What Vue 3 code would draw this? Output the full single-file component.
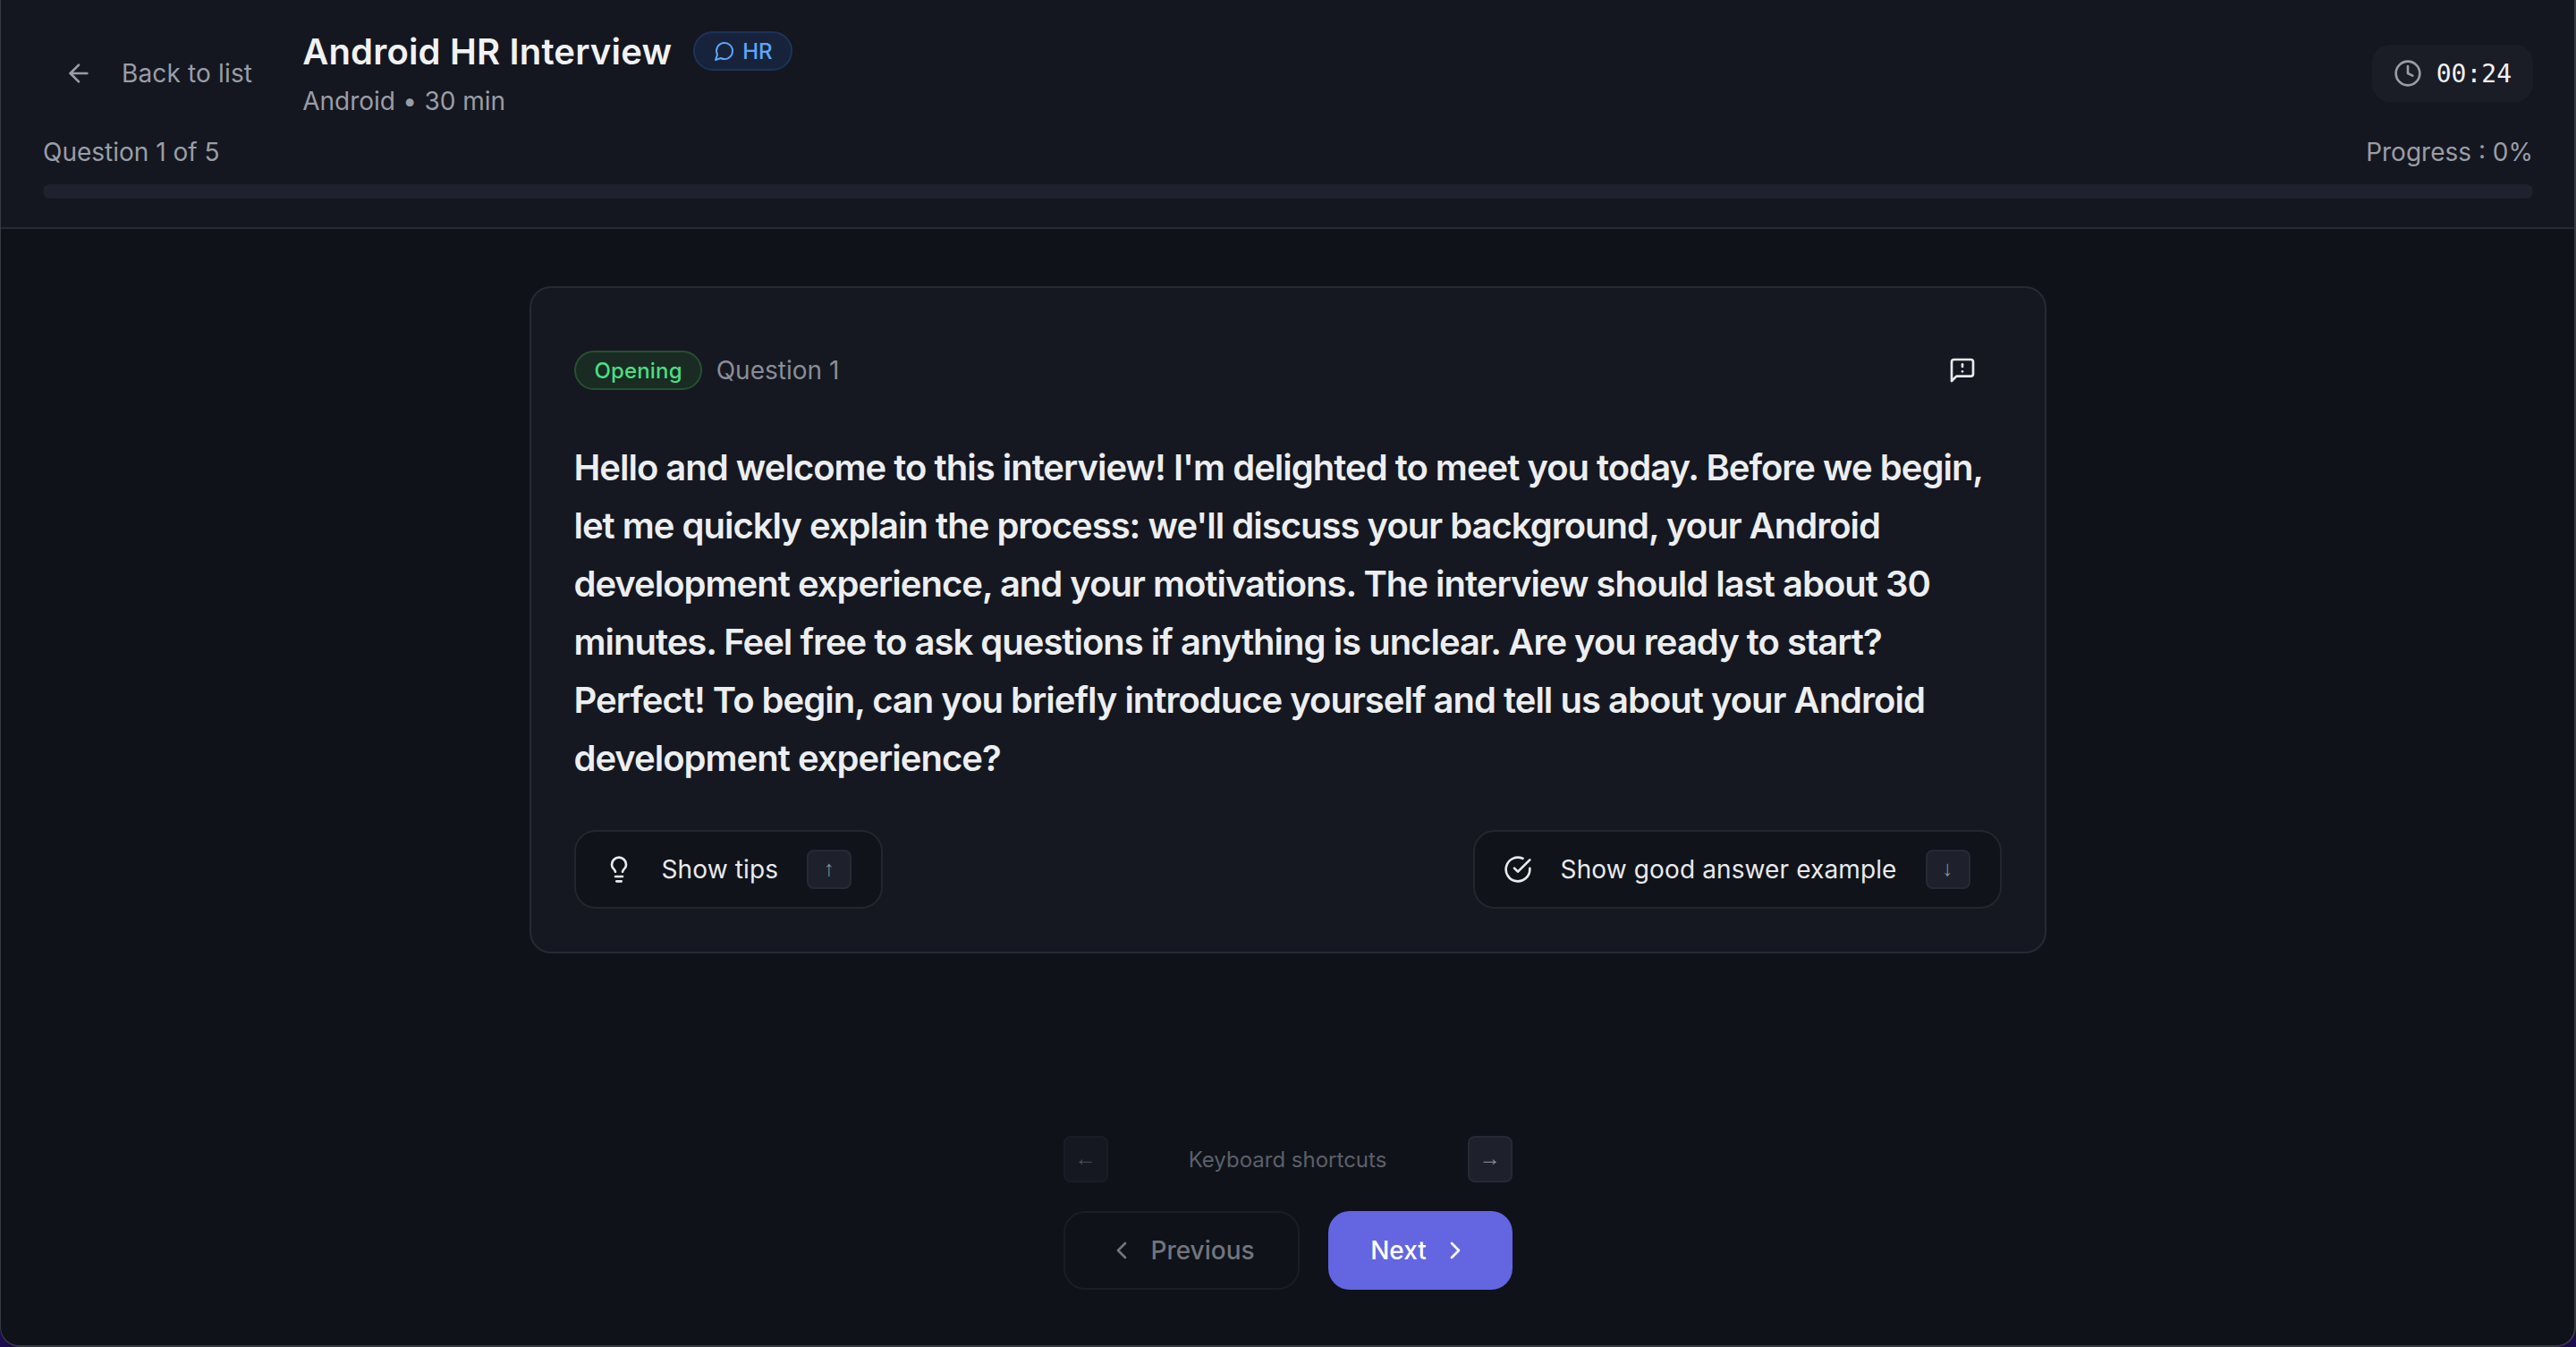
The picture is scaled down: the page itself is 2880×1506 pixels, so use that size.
<template>
  <div class="page">
    <header class="top">
      <div class="top_row">
        <div class="top_left">
          <button class="back">
            <svg class="ic32" viewBox="0 0 24 24"><path d="m12 19-7-7 7-7" /><path d="M19 12H5" /></svg>
            <span>Back to list</span>
          </button>
          <div>
            <div class="title_line">
              <h1>Android HR Interview</h1>
              <span class="type_badge">
                <svg class="ic24" viewBox="0 0 24 24"><path d="M7.9 20A9 9 0 1 0 4 16.1L2 22Z" /></svg>
                HR
              </span>
            </div>
            <p class="sub">Android <span class="dot">•</span> 30 min</p>
          </div>
        </div>
        <div class="timer">
          <svg class="ic32" viewBox="0 0 24 24"><circle cx="12" cy="12" r="10" /><path d="M12 6v6l4 2" /></svg>
          <span>00:24</span>
        </div>
      </div>
      <div class="progress_text">
        <span>Question 1 of 5</span>
        <span>Progress : {{ progress }}%</span>
      </div>
      <div class="bar"><div class="bar_fill" :style="{ width: progress + '%' }"></div></div>
    </header>

    <main class="content">
      <section class="card">
        <div class="card_head">
          <div class="card_tags">
            <span class="tag">Opening</span>
            <span class="qnum">Question 1</span>
          </div>
          <svg class="ic32 report" viewBox="0 0 24 24"><path d="M21 15a2 2 0 0 1-2 2H7l-4 4V5a2 2 0 0 1 2-2h14a2 2 0 0 1 2 2z" /><path d="M12 7v2" /><path d="M12 13h.01" /></svg>
        </div>
        <p class="question">{{ question }}</p>
        <div class="card_actions">
          <button class="action">
            <svg class="ic32" viewBox="0 0 24 24"><path d="M15 14c.2-1 .7-1.7 1.5-2.5 1-.9 1.5-2.2 1.5-3.5A6 6 0 0 0 6 8c0 1 .2 2.2 1.5 3.5.7.7 1.3 1.5 1.5 2.5" /><path d="M9 18h6" /><path d="M10 22h4" /></svg>
            <span>Show tips</span>
            <kbd class="key">↑</kbd>
          </button>
          <button class="action">
            <svg class="ic32" viewBox="0 0 24 24"><path d="M22 11.08V12a10 10 0 1 1-5.93-9.14" /><path d="m9 11 3 3L22 4" /></svg>
            <span>Show good answer example</span>
            <kbd class="key">↓</kbd>
          </button>
        </div>
      </section>
    </main>

    <footer class="nav">
      <div class="shortcuts">
        <kbd class="key tall faded">←</kbd>
        <span>Keyboard shortcuts</span>
        <kbd class="key tall">→</kbd>
      </div>
      <div class="nav_buttons">
        <button class="prev">
          <svg class="ic32" viewBox="0 0 24 24"><path d="m15 18-6-6 6-6" /></svg>
          Previous
        </button>
        <button class="next">
          Next
          <svg class="ic32" viewBox="0 0 24 24"><path d="m9 18 6-6-6-6" /></svg>
        </button>
      </div>
    </footer>
  </div>
</template>

<script setup>
const progress = 0
const question = "Hello and welcome to this interview! I'm delighted to meet you today. Before we begin, let me quickly explain the process: we'll discuss your background, your Android development experience, and your motivations. The interview should last about 30 minutes. Feel free to ask questions if anything is unclear. Are you ready to start? Perfect! To begin, can you briefly introduce yourself and tell us about your Android development experience?"
</script>

<style>
html, body { margin: 0; background: #1c0c4e; }
</style>

<style scoped>
* { box-sizing: border-box; }
h1, p { margin: 0; padding: 0; }
button {
  font-family: inherit;
  padding: 0;
  background: transparent;
  border: 0;
  cursor: pointer;
}
svg {
  fill: none;
  stroke: currentColor;
  stroke-width: 2;
  stroke-linecap: round;
  stroke-linejoin: round;
  flex: none;
}
.ic32 { width: 32px; height: 32px; }
.ic24 { width: 24px; height: 24px; }

.page {
  display: flex;
  flex-direction: column;
  height: 1506px;
  border-style: solid;
  border-color: #383a42;
  border-width: 0 2px 2px 1px;
  border-radius: 0 0 22px 22px;
  overflow: hidden;
  background: #0f1219;
  font-family: Inter, "Liberation Sans", sans-serif;
  color: #e9eaec;
}

.top {
  padding: 31px 46px 32px 47px;
  background: #141720;
  border-bottom: 2px solid #272a35;
}
.top_row {
  display: flex;
  justify-content: space-between;
  align-items: center;
}
.top_left {
  display: flex;
  align-items: center;
  gap: 32px;
}
.back {
  display: flex;
  align-items: center;
  gap: 32px;
  padding: 0 24px;
  height: 64px;
  font-size: 28px;
  letter-spacing: 0.15px;
  color: #9a9da6;
}
.title_line {
  display: flex;
  align-items: center;
  gap: 24px;
  height: 52px;
}
h1 {
  font-size: 40px;
  font-weight: 600;
  letter-spacing: 0.18px;
  color: #f1f2f3;
}
.type_badge {
  display: flex;
  align-items: center;
  gap: 8px;
  height: 44px;
  padding: 0 20px 0 21px;
  border: 2px solid #1e3259;
  border-radius: 22px;
  background: #17233a;
  color: #60a5fa;
  font-size: 24px;
  font-weight: 500;
}
.sub {
  margin-top: 10px;
  font-size: 28px;
  line-height: 40px;
  color: #9a9da6;
}
.dot { margin: 0 0.5px; }
.timer {
  display: flex;
  align-items: center;
  gap: 16px;
  height: 64px;
  padding: 0 24px;
  border-radius: 20px;
  background: #1a1d26;
  color: #9a9da6;
}
.timer span {
  font-family: "DejaVu Sans Mono", monospace;
  font-size: 28px;
  color: #f1f2f3;
}
.progress_text {
  display: flex;
  justify-content: space-between;
  margin-top: 17px;
  font-size: 28px;
  line-height: 40px;
  color: #9a9da6;
}
.bar {
  height: 16px;
  margin-top: 16px;
  border-radius: 8px;
  background: #1f222c;
  overflow: hidden;
}
.bar_fill { height: 100%; background: #6366e0; }

.content {
  display: flex;
  justify-content: center;
  padding-top: 64px;
}
.card {
  width: 1696px;
  height: 746px;
  padding: 70px 48px 48px;
  border: 2px solid #272a35;
  border-radius: 24px;
  background: #151821;
}
.card_head {
  display: flex;
  justify-content: space-between;
  align-items: center;
}
.card_tags {
  display: flex;
  align-items: center;
  gap: 16px;
}
.tag {
  display: flex;
  align-items: center;
  height: 44px;
  padding: 0 20px 0 21px;
  border: 2px solid #25512f;
  border-radius: 22px;
  background: #1a2b24;
  color: #4ade80;
  font-size: 24px;
  font-weight: 500;
  letter-spacing: 0.15px;
}
.qnum {
  font-size: 28px;
  color: #8a8d97;
}
.report {
  margin-right: 28px;
  color: #e9eaec;
}
.question {
  margin-top: 54px;
  font-size: 40px;
  line-height: 65px;
  font-weight: 600;
  letter-spacing: -1px;
  color: #eceef0;
}
.card_actions {
  display: flex;
  justify-content: space-between;
  margin-top: 48px;
}
.action {
  display: flex;
  align-items: center;
  gap: 32px;
  height: 88px;
  padding: 0 33px 0 32px;
  border: 2px solid #23262f;
  border-radius: 24px;
  background: #10131a;
  color: #e9eaec;
  font-size: 28px;
  letter-spacing: 0.12px;
}
.key {
  display: flex;
  align-items: center;
  justify-content: center;
  width: 50px;
  height: 44px;
  padding-bottom: 3px;
  border: 2px solid #272a35;
  border-radius: 8px;
  background: #1e212b;
  color: #8a8d97;
  font-family: "Liberation Sans", sans-serif;
  font-size: 24px;
  font-weight: 700;
}

.nav {
  margin-top: auto;
  padding-bottom: 62px;
  align-self: center;
  width: 502px;
}
.shortcuts {
  display: flex;
  justify-content: space-between;
  align-items: center;
  font-size: 24px;
  color: #5c606a;
}
.key.tall { height: 52px; }
.key.faded {
  background: #151821;
  border-color: #1a1d26;
  color: #4b4e57;
}
.nav_buttons {
  display: flex;
  justify-content: space-between;
  margin-top: 32px;
}
.prev, .next {
  display: flex;
  align-items: center;
  justify-content: center;
  height: 88px;
  border-radius: 24px;
  font-size: 28px;
  font-weight: 500;
}
.prev {
  gap: 16px;
  width: 264px;
  border: 2px solid #1a1d26;
  color: #72757d;
}
.next {
  gap: 16px;
  width: 206px;
  background: #6366e0;
  color: #fff;
}
</style>
